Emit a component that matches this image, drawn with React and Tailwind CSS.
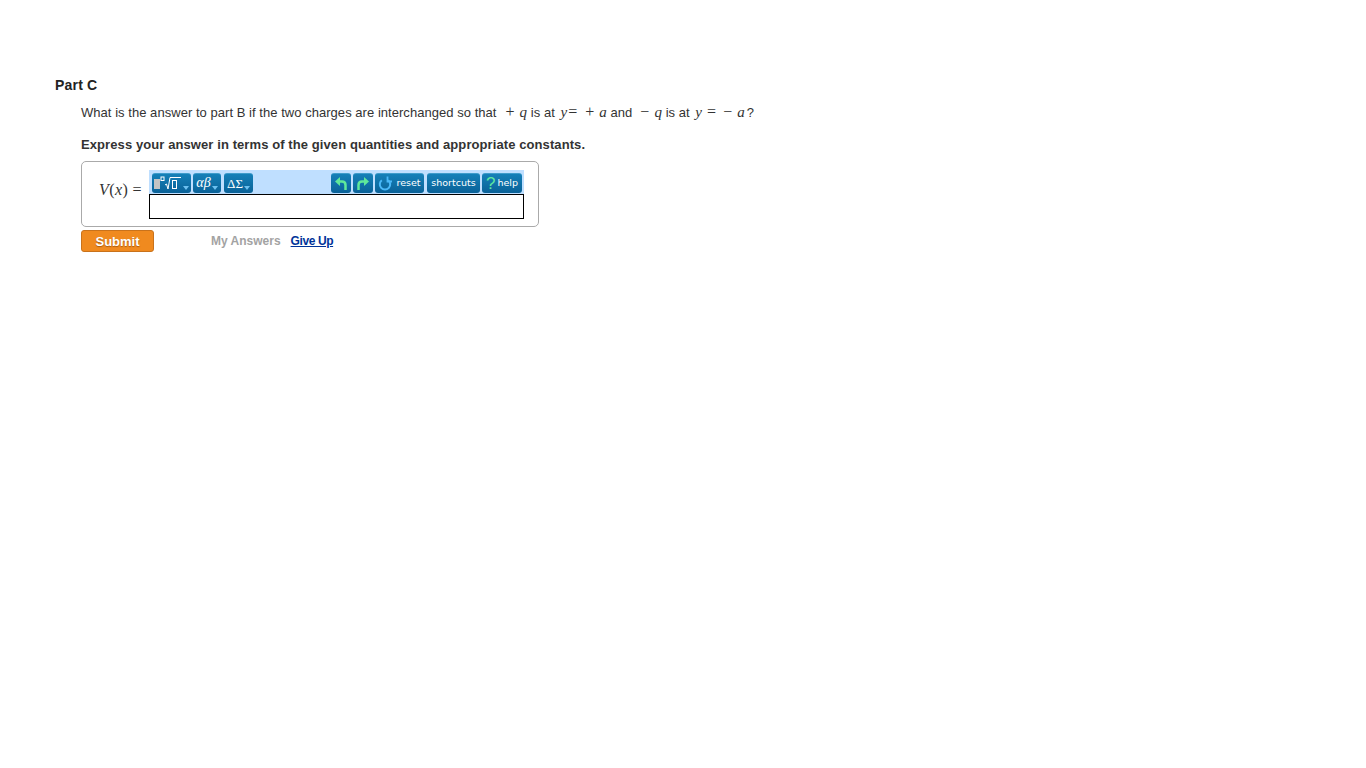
const M = ({ c = "", children }) => (
  <span className={`${c} font-['Liberation_Serif',serif] italic text-[15px]`}>{children}</span>
);
const O = ({ c = "", children }) => (
  <span className={`${c} font-['Liberation_Serif',serif] text-[16px]`}>{children}</span>
);

const Caret = () => (
  <svg width="6" height="4" viewBox="0 0 6 4" className="mt-[10px] ml-px shrink-0">
    <path d="M0 0h6L3 4z" fill="#6cc0f0" />
  </svg>
);

const Btn = ({ w, children }) => (
  <div className={`${w} h-[20px] pb-px flex items-center justify-center rounded-[3px] border-t border-[#3f9ccb] bg-gradient-to-b from-[#1580b8] to-[#0a6298] text-white font-['DejaVu_Sans',sans-serif] text-[9.5px] leading-none shrink-0`}>
    {children}
  </div>
);

export default function App() {
  return (
    <div className="min-h-screen bg-white pt-[77px] pl-[55px] font-['Liberation_Sans',Arial,sans-serif] text-[#333]">
      <h2 className="text-[14px] tracking-[0.2px] leading-[16px] font-bold text-[#222]">Part C</h2>
      <div className="pl-[26px]">
        <p className="mt-[11px] h-[16px] text-[13px] tracking-[0.04px] leading-[16px] whitespace-pre">
          What is the answer to part B if the two charges are interchanged so that
          <O c="ml-[9px]">+</O><M c="ml-[5px]">q</M> is at <M c="ml-[2px]">y</M><O c="ml-[1px]">=</O><O c="ml-[8px]">+</O><M c="ml-[5px]">a</M> and<O c="ml-[8px]">−</O><M c="ml-[5px]">q</M> is at <M c="ml-[2px]">y</M><O c="ml-[5px]">=</O><O c="ml-[7px]">−</O><M c="ml-[5px]">a</M><span className="ml-[2px]">?</span>
        </p>
        <p className="mt-[17px] text-[13px] tracking-[0.09px] leading-[16px] font-bold">
          Express your answer in terms of the given quantities and appropriate constants.
        </p>
        <div className="mt-[8px] w-[458px] h-[66px] border border-[#aaa] rounded-[5px] flex pt-[8px] pl-[17px]">
          <div className="w-[50px] pt-[12px] font-['Liberation_Serif',serif] text-[16px] tracking-[0.4px] leading-[16px] text-[#333] whitespace-pre">
            <i>V</i>(<i>x</i>) =
          </div>
          <div className="w-[375px]">
            <div className="h-[24px] bg-[#bfdfff] flex items-end pb-px pl-[3px] pr-[2px]">
              <div className="flex gap-[2px]">
                <Btn w="w-[39px]">
                  <svg width="28" height="14" viewBox="0 0 28 14" className="shrink-0">
                    <rect x="0" y="3" width="6" height="10" fill="#c4c4c4" />
                    <rect x="7" y="1" width="3" height="3.5" fill="none" stroke="#fff" strokeWidth="1" />
                    <path d="M11 9l1.5-1 1.500 5 2-11.500h11" fill="none" stroke="#fff" strokeWidth="1" />
                    <rect x="18.500" y="4.500" width="4" height="8" fill="none" stroke="#fff" strokeWidth="1" />
                  </svg>
                  <Caret />
                </Btn>
                <Btn w="w-[28px]">
                  <span className="font-['Liberation_Serif',serif] italic text-[14px]">αβ</span>
                  <Caret />
                </Btn>
                <Btn w="w-[29px] ml-px">
                  <span className="font-['Liberation_Serif',serif] text-[13px]">ΔΣ</span>
                  <Caret />
                </Btn>
              </div>
              <div className="ml-auto flex gap-[2px]">
                <Btn w="w-[20px]">
                  <svg width="14" height="15" viewBox="0 0 14 15">
                    <path d="M1 5.500L6 1v9z" fill="#5fe89a" />
                    <path d="M5 5.500h3q3.500 0 3.500 3.500v5" fill="none" stroke="#5fe89a" strokeWidth="2.500" />
                  </svg>
                </Btn>
                <Btn w="w-[20px]">
                  <svg width="14" height="15" viewBox="0 0 14 15">
                    <path d="M13 5.500L8 1v9z" fill="#5fe89a" />
                    <path d="M9 5.500H6Q2.500 5.500 2.500 9v5" fill="none" stroke="#5fe89a" strokeWidth="2.500" />
                  </svg>
                </Btn>
                <Btn w="w-[49px] gap-[4px]">
                  <svg width="14" height="15" viewBox="0 0 14 15" className="shrink-0">
                    <path d="M3.800 4.200a5.200 5.200 0 1 0 6.400 0" fill="none" stroke="#49b8f8" strokeWidth="2" />
                    <path d="M9.500 0.500v5h5" fill="none" stroke="#49b8f8" strokeWidth="1.800" />
                  </svg>
                  <span>reset</span>
                </Btn>
                <Btn w="w-[53px] ml-px">shortcuts</Btn>
                <Btn w="w-[40px] gap-[2px]">
                  <span className="text-[#5fe8a0] text-[17px] font-['Liberation_Sans',sans-serif]">?</span>
                  <span>help</span>
                </Btn>
              </div>
            </div>
            <div className="h-[25px] border border-black bg-white" />
          </div>
        </div>
        <div className="mt-[3px] flex items-center">
          <button className="w-[73px] h-[22px] bg-[#f08a1f] border border-[#c9721b] rounded-[3px] text-white text-[13px] font-bold leading-none [text-shadow:0_1px_1px_#a85c10]">
            Submit
          </button>
          <span className="ml-[57px] text-[12px] font-bold text-[#a3a3a3]">My Answers</span>
          <a href="#" className="ml-[10px] text-[12px] tracking-[-0.4px] font-bold text-[#003399] underline">Give Up</a>
        </div>
      </div>
    </div>
  );
}
